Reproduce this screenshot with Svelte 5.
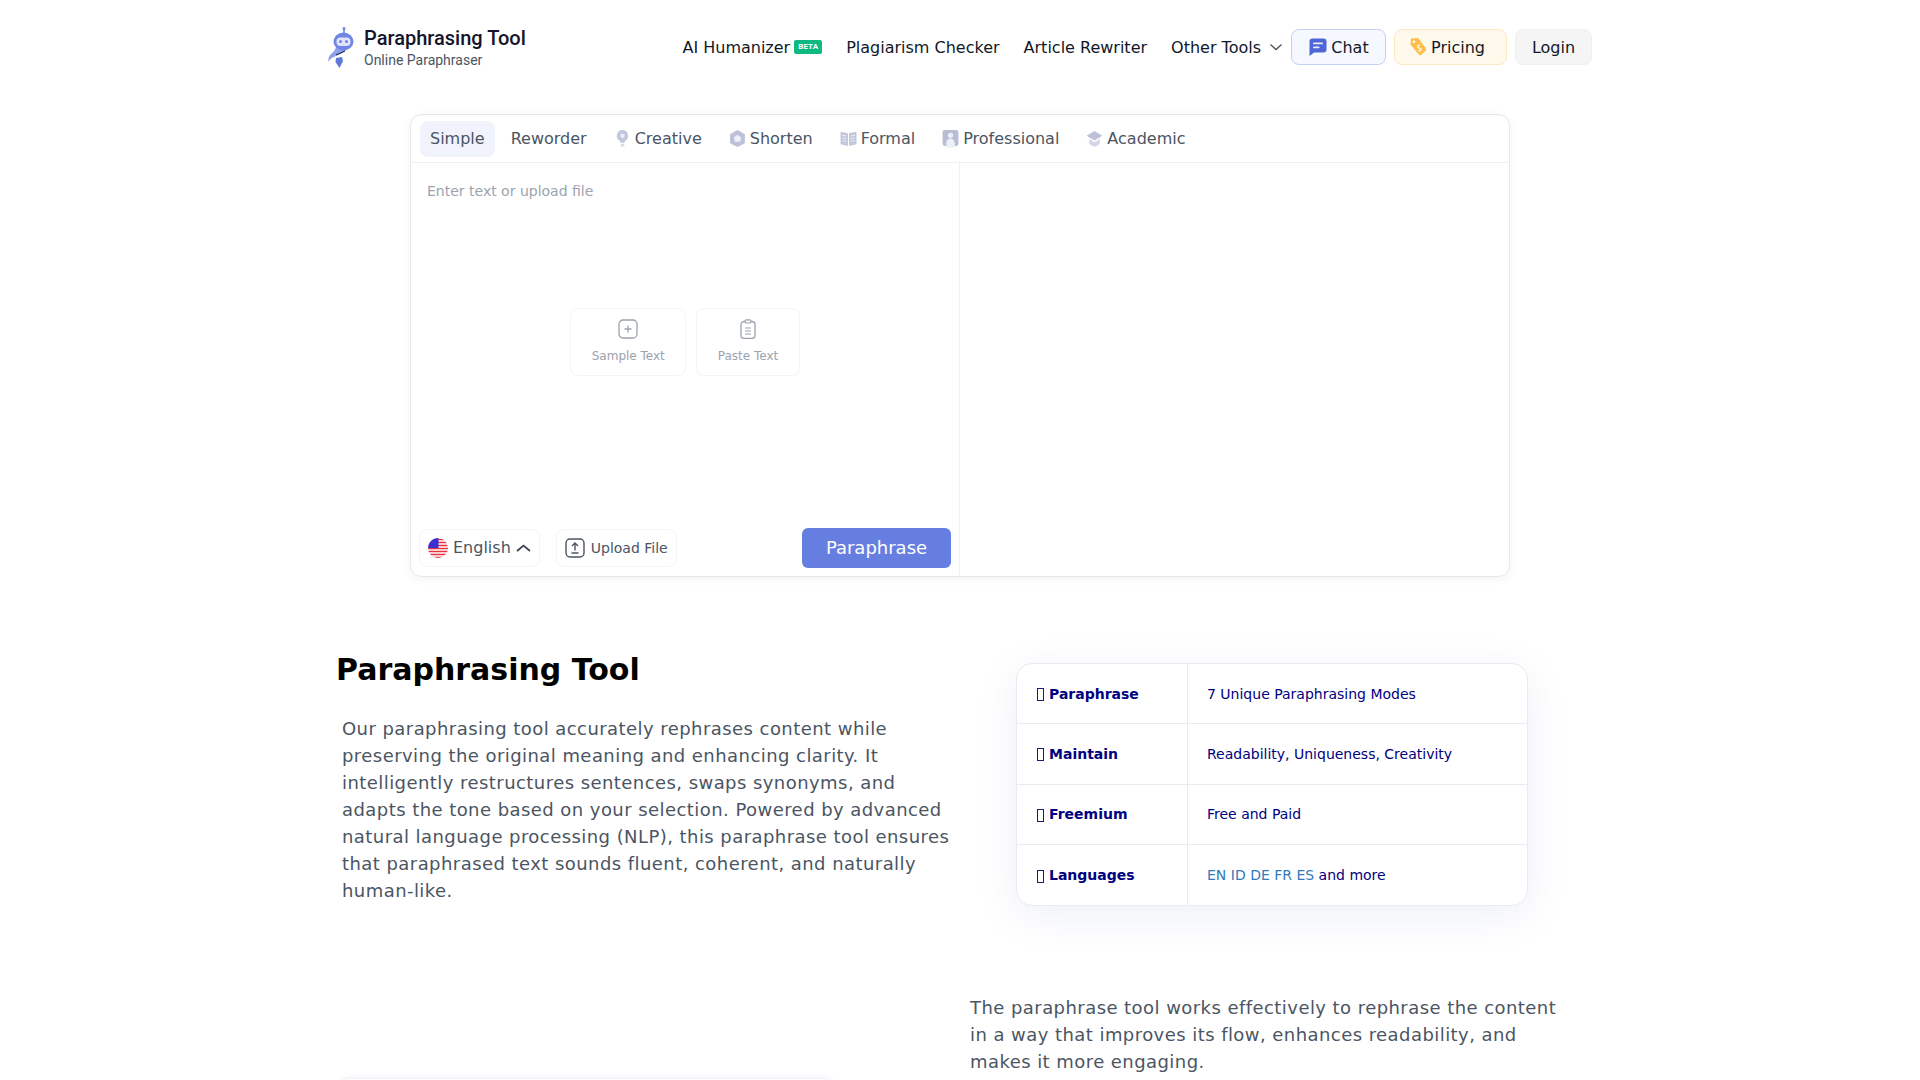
<script>
  // Tabs and fact-table rows live here so the markup stays short.
  const tabs = [
    { label: 'Simple', active: true },
    { label: 'Reworder' },
    { label: 'Creative', icon: 'bulb' },
    { label: 'Shorten', icon: 'hex' },
    { label: 'Formal', icon: 'book' },
    { label: 'Professional', icon: 'badge' },
    { label: 'Academic', icon: 'cap' }
  ];

  const facts = [
    { name: 'Paraphrase', value: '7 Unique Paraphrasing Modes' },
    { name: 'Maintain', value: 'Readability, Uniqueness, Creativity' },
    { name: 'Freemium', value: 'Free and Paid' },
    { name: 'Languages', codes: 'EN ID DE FR ES', value: ' and more' }
  ];
</script>

<div class="page">
  <header class="topbar">
    <a class="brand" href="#top">
      <svg class="brand-mark" viewBox="0 0 30 44" width="30" height="44" aria-hidden="true">
        <circle cx="17" cy="3.5" r="1.5" fill="#7086e4" />
        <rect x="16.2" y="4" width="1.6" height="4" fill="#7086e4" />
        <path d="M9 21c0 4-3 6-6 9-1.500 2-2 5-1.500 7 1.500-4 5.500-5 9.500-7 4-2 7-3 8-5z" fill="#8ea0ee" />
        <ellipse cx="16.5" cy="16.5" rx="10" ry="9" fill="#7086e4" />
        <rect x="9.5" y="12.5" width="14" height="8.5" rx="4" fill="#dfe4fa" />
        <circle cx="13.5" cy="16.5" r="1.5" fill="#7086e4" />
        <circle cx="19.5" cy="16.5" r="1.5" fill="#7086e4" />
        <path d="M9 30l9-4" stroke="#1a1a2e" stroke-width="1" />
        <path d="M9 33l6-1 1 4-3.500 7-4-6z" fill="#6078de" />
      </svg>
      <span class="brand-text">
        <span class="brand-name">Paraphrasing Tool</span>
        <span class="brand-sub">Online Paraphraser</span>
      </span>
    </a>

    <nav class="nav">
      <a href="#top" class="nav-link">AI Humanizer <span class="beta">BETA</span></a>
      <a href="#top" class="nav-link">Plagiarism Checker</a>
      <a href="#top" class="nav-link">Article Rewriter</a>
      <a href="#top" class="nav-link">
        Other Tools
        <svg class="caret" viewBox="0 0 14 8" width="14" height="8" aria-hidden="true">
          <path d="M1.5 1.5L7 6.5l5.500-5" fill="none" stroke="#4b5563" stroke-width="1.3" />
        </svg>
      </a>
      <div class="nav-actions">
        <button class="pill pill-chat">
          <svg viewBox="0 0 20 20" width="20" height="20" aria-hidden="true">
            <path d="M4.5 1.5h11a3 3 0 0 1 3 3v8a3 3 0 0 1-3 3H6l-4.500 3.500V4.500a3 3 0 0 1 3-3z" fill="#4f66d6" />
            <rect x="5" y="5.5" width="10" height="1.8" rx=".9" fill="#e8ecfb" />
            <rect x="5" y="9.5" width="6.5" height="1.8" rx=".9" fill="#e8ecfb" />
          </svg>
          Chat
        </button>
        <button class="pill pill-pricing">
          <svg viewBox="0 0 20 20" width="20" height="20" aria-hidden="true">
            <path d="M3 1.5l7-.5 8 10.500a2 2 0 0 1-.5 2.500l-4 3.500a2 2 0 0 1-2.800-.3L2.500 7.500z" fill="#fbbf4a" />
            <circle cx="6" cy="4.8" r="1.3" fill="#fff" />
            <path d="M11.800 8.500c-1.500-1-3 .6-2 1.800s2.800.4 3.200 1.800-1.400 2.300-2.700 1.300" fill="none" stroke="#fff" stroke-width="1.1" />
          </svg>
          Pricing
        </button>
        <button class="pill pill-login">Login</button>
      </div>
    </nav>
  </header>

  <main>
    <section class="editor">
      <div class="tabs">
        {#each tabs as tab}
          <button class="tab" class:active={tab.active}>
            {#if tab.icon === 'bulb'}
              <svg viewBox="0 0 16 18" width="17" height="19" aria-hidden="true">
                <path d="M8 1a5.500 5.500 0 0 0-3 10c.6.500 1 1.200 1 2h4c0-.8.4-1.500 1-2A5.500 5.500 0 0 0 8 1z" fill="#c3c7dc" />
                <circle cx="8" cy="6.5" r="2" fill="#eef0f8" />
                <rect x="6.2" y="14" width="3.6" height="2.6" rx="1" fill="#d7dae8" />
              </svg>
            {:else if tab.icon === 'hex'}
              <svg viewBox="0 0 16 18" width="17" height="19" aria-hidden="true">
                <path d="M8 1l7 4v8.500L8 17l-7-3.500V5z" fill="#bcc1d8" />
                <path d="M8 5.500l3.500 2.500-1 4h-5l-1-4z" fill="#eef0f8" />
              </svg>
            {:else if tab.icon === 'book'}
              <svg viewBox="0 0 16 18" width="17" height="19" aria-hidden="true">
                <path d="M.5 2.500l7 1.500v12l-7-1.500zM15.500 2.500l-7 1.500v12l7-1.500z" fill="#c3c7dc" />
                <path d="M2 6l4 .7M2 8.500l4 .7M2 11l4 .7M10 6.700l4-.7M10 9.200l4-.7M10 11.700l4-.7" stroke="#eef0f8" stroke-width=".9" />
              </svg>
            {:else if tab.icon === 'badge'}
              <svg viewBox="0 0 16 18" width="17" height="19" aria-hidden="true">
                <rect x=".5" y="1" width="15" height="15" rx="2" fill="#b9bdd4" />
                <circle cx="8" cy="6" r="2.5" fill="#eef0f8" />
                <path d="M4 13c.5-2.500 2-4 4-4s3.500 1.500 4 4v4.500H4z" fill="#eef0f8" />
              </svg>
            {:else if tab.icon === 'cap'}
              <svg viewBox="0 0 16 18" width="17" height="19" aria-hidden="true">
                <path d="M8 2l7.500 4.500L8 11 .5 6.500z" fill="#bcc1d8" />
                <path d="M3 9.500v4.500c1.500 1.500 3.300 2.500 5 2.500s3.500-1 5-2.500V9.500L8 12.500z" fill="#d3d6e6" />
              </svg>
            {/if}
            {tab.label}
          </button>
        {/each}
      </div>

      <div class="panes">
        <div class="pane-input">
          <div class="input-body">
            <textarea class="source" placeholder="Enter text or upload file"></textarea>
            <div class="starters">
              <button class="starter">
                <svg viewBox="0 0 20 20" width="20" height="20" aria-hidden="true">
                  <rect x="1" y="1" width="18" height="18" rx="4" fill="none" stroke="#9ca3af" stroke-width="1.3" />
                  <path d="M10 6.500v7M6.500 10h7" stroke="#9ca3af" stroke-width="1.3" />
                </svg>
                Sample Text
              </button>
              <button class="starter">
                <svg viewBox="0 0 20 20" width="20" height="20" aria-hidden="true">
                  <rect x="3" y="2.5" width="14" height="17" rx="3" fill="none" stroke="#9ca3af" stroke-width="1.3" />
                  <rect x="7" y=".8" width="6" height="3.2" rx="1.4" fill="#fff" stroke="#9ca3af" stroke-width="1.2" />
                  <path d="M7 9h6M7 12h6M7 15h6" stroke="#9ca3af" stroke-width="1.2" />
                </svg>
                Paste Text
              </button>
            </div>
          </div>

          <div class="toolbar">
            <button class="tool">
              <svg class="flag" viewBox="0 0 20 20" width="20" height="20" aria-hidden="true">
                <defs><clipPath id="flag-round"><circle cx="10" cy="10" r="10" /></clipPath></defs>
                <g clip-path="url(#flag-round)">
                  <rect width="20" height="20" fill="#fff" />
                  <path d="M0 1.500h20M0 4.500h20M0 7.500h20M0 10.500h20M0 13.500h20M0 16.500h20M0 19.500h20" stroke="#e8313c" stroke-width="1.5" />
                  <rect width="10.5" height="10" fill="#3a2fd0" />
                </g>
              </svg>
              <span class="lang">English</span>
              <svg viewBox="0 0 15 8" width="15" height="8" aria-hidden="true">
                <path d="M1 7l6.500-5.500L14 7" fill="none" stroke="#374151" stroke-width="1.7" />
              </svg>
            </button>
            <button class="tool tool-upload">
              <svg viewBox="0 0 20 20" width="20" height="20" aria-hidden="true">
                <rect x="1" y="1" width="18" height="18" rx="4" fill="none" stroke="#4b5563" stroke-width="1.4" />
                <path d="M10 12.500V5.500M7 8l3-3 3 3M6.500 15h7" fill="none" stroke="#4b5563" stroke-width="1.4" />
              </svg>
              Upload File
            </button>
            <button class="submit">Paraphrase</button>
          </div>
        </div>
        <div class="pane-output"></div>
      </div>
    </section>

    <section class="intro">
      <div class="intro-copy">
        <h1>Paraphrasing Tool</h1>
        <p>Our paraphrasing tool accurately rephrases content while preserving the original meaning and enhancing clarity. It intelligently restructures sentences, swaps synonyms, and adapts the tone based on your selection. Powered by advanced natural language processing (NLP), this paraphrase tool ensures that paraphrased text sounds fluent, coherent, and naturally human-like.</p>
      </div>
      <div class="facts">
        {#each facts as fact}
          <div class="fact-row">
            <div class="fact-name"><span class="tofu" aria-hidden="true"></span>{fact.name}</div>
            <div class="fact-value">
              {#if fact.codes}<span class="codes">{fact.codes}</span>{/if}{fact.value}
            </div>
          </div>
        {/each}
      </div>
    </section>

    <section class="second">
      <div class="figure"></div>
      <p>The paraphrase tool works effectively to rephrase the content in a way that improves its flow, enhances readability, and makes it more engaging.</p>
    </section>
  </main>
</div>

<style>
  :global(body) {
    margin: 0;
    background: #fff;
    font-family: "DejaVu Sans", sans-serif;
  }

  .page {
    height: 1080px;
    overflow: hidden;
  }

  a {
    color: inherit;
    text-decoration: none;
  }

  button {
    font: inherit;
    cursor: pointer;
  }

  .topbar {
    box-sizing: border-box;
    width: 1280px;
    height: 94px;
    margin: 0 auto;
    padding: 29px 8px 0 7px;
    display: flex;
    justify-content: space-between;
    align-items: flex-start;
  }

  .brand {
    display: flex;
    align-items: center;
    gap: 7px;
    height: 36px;
    font-family: Roboto, sans-serif;
  }

  .brand-text {
    display: flex;
    flex-direction: column;
    padding-top: 2px;
  }

  .brand-name {
    font-size: 20px;
    font-weight: 500;
    line-height: 24px;
    color: #14142b;
  }

  .brand-sub {
    margin-top: 1px;
    font-size: 14px;
    line-height: 19px;
    color: #4b5563;
  }

  .nav {
    display: flex;
    align-items: center;
    gap: 24px;
    height: 36px;
    font-size: 16px;
    color: #111827;
  }

  .nav-link {
    display: flex;
    align-items: center;
    gap: 4px;
    white-space: nowrap;
  }

  .beta {
    background: #10b981;
    color: #fff;
    font: 700 8px/14px Roboto, sans-serif;
    padding: 0 4px;
    border-radius: 2px;
    letter-spacing: .1px;
  }

  .caret {
    margin-left: 4px;
  }

  .nav-actions {
    display: flex;
    gap: 8px;
    margin-left: -16px;
  }

  .pill {
    box-sizing: border-box;
    height: 36px;
    display: flex;
    align-items: center;
    justify-content: center;
    gap: 3px;
    border-radius: 8px;
    font-size: 16px;
    color: #111827;
    border: 1px solid;
  }

  .pill-chat {
    width: 95px;
    background: #f5f8ff;
    border-color: #c6cff0;
  }

  .pill-pricing {
    width: 113px;
    padding: 0 10px 0 2px;
    background: #fff9ec;
    border-color: #fce9c1;
  }

  .pill-login {
    width: 77px;
    background: #f5f5f6;
    border-color: #f0f0f1;
  }

  .editor {
    box-sizing: border-box;
    width: 1100px;
    height: 463px;
    margin: 20px auto 0;
    display: flex;
    flex-direction: column;
    background: #fff;
    border: 1px solid #e5e7eb;
    border-radius: 12px;
    box-shadow: 0 2px 10px rgba(0, 0, 0, .06);
  }

  .tabs {
    display: flex;
    align-items: center;
    gap: 7px;
    height: 47px;
    padding: 0 9px;
    border-bottom: 1px solid #f0f1f3;
  }

  .tab {
    display: flex;
    align-items: center;
    gap: 4px;
    height: 36px;
    padding: 0 10px;
    border: 0;
    border-radius: 8px;
    background: none;
    font-size: 16px;
    color: #4b5563;
  }

  .tab.active {
    margin-right: -1px;
    background: #f1f3fc;
  }

  .panes {
    flex: 1;
    display: flex;
    min-height: 0;
  }

  .pane-input {
    width: 548px;
    display: flex;
    flex-direction: column;
    border-right: 1px solid #f0f1f3;
  }

  .pane-output {
    flex: 1;
  }

  .input-body {
    position: relative;
    flex: 1;
    display: flex;
    align-items: center;
    justify-content: center;
  }

  .source {
    position: absolute;
    inset: 0;
    box-sizing: border-box;
    padding: 20px 16px;
    border: 0;
    outline: 0;
    resize: none;
    background: none;
    font: 14px/17px "DejaVu Sans", sans-serif;
  }

  .source::placeholder {
    color: #9ca3af;
    opacity: 1;
  }

  .starters {
    position: relative;
    display: flex;
    gap: 10px;
  }

  .starter {
    box-sizing: border-box;
    height: 68px;
    padding: 0 20.5px 2px;
    display: flex;
    flex-direction: column;
    align-items: center;
    justify-content: center;
    gap: 10px;
    background: #fff;
    border: 1px solid #f3f4f6;
    border-radius: 8px;
    font-size: 12px;
    line-height: 14px;
    color: #9ca3af;
  }

  .toolbar {
    box-sizing: border-box;
    height: 56px;
    padding: 7px 8px 8px;
    display: flex;
    align-items: center;
    gap: 16px;
  }

  .tool {
    box-sizing: border-box;
    height: 38px;
    padding: 0 8px;
    display: flex;
    align-items: center;
    gap: 5px;
    background: #fff;
    border: 1px solid #f3f4f6;
    border-radius: 8px;
    font-size: 14px;
    color: #4b5563;
  }

  .lang {
    font-size: 16px;
  }

  .tool-upload {
    gap: 6px;
  }

  .submit {
    margin-left: auto;
    width: 149px;
    height: 40px;
    border: 0;
    border-radius: 6px;
    background: #667ee0;
    color: #fff;
    font-size: 18px;
  }

  .intro {
    box-sizing: border-box;
    width: 1280px;
    margin: 0 auto;
    padding: 70px 0 0 16px;
    display: flex;
    align-items: flex-start;
  }

  .intro-copy {
    width: 680px;
    padding-top: 3px;
  }

  h1 {
    margin: 0;
    font-size: 30px;
    line-height: 40px;
    font-weight: 700;
    color: #000;
  }

  .intro-copy p {
    width: 612px;
    margin: 25px 0 0 6px;
    font-size: 18px;
    line-height: 27px;
    letter-spacing: .44px;
    color: #4b5563;
  }

  .facts {
    box-sizing: border-box;
    width: 512px;
    margin-top: 16px;
    background: #fff;
    border: 1px solid #e9ebef;
    border-radius: 16px;
    box-shadow: 0 10px 40px rgba(90, 110, 190, .1);
    font-size: 14px;
    color: #000080;
  }

  .fact-row {
    box-sizing: border-box;
    display: flex;
    height: 60.3px;
    align-items: stretch;
    border-bottom: 1px solid #e9ebef;
  }

  .fact-row:last-child {
    border-bottom: 0;
  }

  .fact-name {
    box-sizing: border-box;
    width: 171px;
    padding-left: 20px;
    display: flex;
    align-items: center;
    white-space: pre;
    font-weight: 700;
    border-right: 1px solid #e9ebef;
  }

  /* the reference shows a missing-glyph box in front of each label */
  .tofu {
    box-sizing: border-box;
    width: 7px;
    height: 13px;
    margin: 2px 5px 0 0;
    border: 1px solid #1a1a6e;
  }

  .fact-value {
    padding-left: 19px;
    display: flex;
    align-items: center;
    white-space: pre;
  }

  .codes {
    color: #337ab7;
  }

  .second {
    box-sizing: border-box;
    width: 1280px;
    margin: 0 auto;
    padding: 0 0 0 21px;
    display: flex;
    align-items: flex-start;
  }

  .figure {
    width: 491px;
    height: 280px;
    margin-top: 173px;
    border-radius: 8px;
    box-shadow: 0 0 6px rgba(90, 110, 190, .16);
  }

  .second p {
    width: 600px;
    margin: 88px 0 0 138px;
    font-size: 18px;
    line-height: 27px;
    letter-spacing: .44px;
    color: #4b5563;
  }
</style>
